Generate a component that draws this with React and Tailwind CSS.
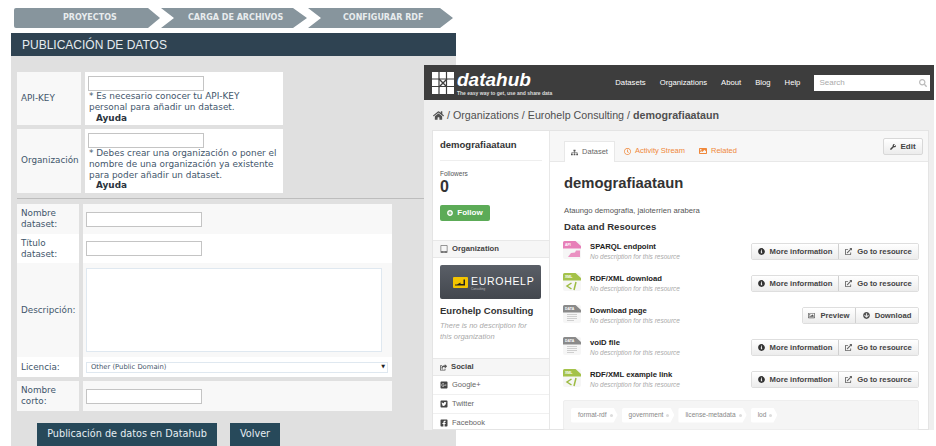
import { FaHome, FaSitemap, FaRegClock, FaImage, FaWrench, FaSearch, FaTabletAlt, FaShareSquare, FaGooglePlusSquare, FaTwitterSquare, FaFacebookSquare, FaInfoCircle, FaExternalLinkAlt, FaRegImage, FaArrowCircleDown, FaPlusCircle } from 'react-icons/fa';

const resources = [
  { name: 'SPARQL endpoint', kind: 'api' },
  { name: 'RDF/XML download', kind: 'xml' },
  { name: 'Download page', kind: 'data', download: true },
  { name: 'voiD file', kind: 'data' },
  { name: 'RDF/XML example link', kind: 'xml' },
];

const kinds = {
  api: { color: '#e77fb8', label: 'API' },
  xml: { color: '#a4c24a', label: 'XML' },
  data: { color: '#8a8a8a', label: 'DATA' },
};

const FileIcon = ({ kind }) => {
  const { color, label } = kinds[kind];
  return (
    <svg width="18" height="18" viewBox="0 0 18 18" className="-ml-[1px] shrink-0">
      <rect x="0" y="0" width="18" height="18" rx="2" fill="#f6f6f6" />
      <path d="M0 1.5A1.5 1.5 0 0 1 1.5 0H12.5L18 5V7.5H0Z" fill={color} />
      <text x="2" y="5" fontSize="3.5" fontWeight="700" fill="#fff" fontFamily="Liberation Sans, sans-serif">{label}</text>
      {kind === 'api' && <path d="M5 16L8 12L12 11.5L13 9.5H17V16Z" fill={color} opacity="0.85" />}
      {kind === 'xml' && <path d="M8.5 10L4 13L8.5 16M13 9L11 17" fill="none" stroke="#9dbb42" strokeWidth="1.5" />}
      {kind === 'data' && <path d="M4 9.5H14M4 11.5H14M4 13.5H14M4 15.5H11" stroke="#cfcfcf" strokeWidth="1" />}
    </svg>
  );
};

const ApiCell = ({ lines }) => (
  <div className="flex-1 whitespace-nowrap bg-white pl-[3px] pt-[4px] text-[8.9px] leading-[10.5px] text-[#3f566b]">
    <div className="h-[15px] w-[116px] border border-[#c4c4c4] bg-white" />
    {lines.map((l) => (
      <div key={l} className="mt-[0.3px] pl-[1px]">{l}</div>
    ))}
    <div className="pl-[8px] font-bold text-[#2b3440]">Ayuda</div>
  </div>
);

const FormRow = ({ label, bg, height, children }) => (
  <div className={`flex gap-[4px] ${height}`}>
    <div className={`flex w-[62px] items-center pl-[4px] ${bg === 'w' ? 'bg-white' : 'bg-[#f8f8f8]'}`}>
      <div className="leading-[11px]">{label}</div>
    </div>
    <div className={`flex flex-1 items-center pl-[3px] ${bg === 'w' ? 'bg-white' : 'bg-[#f8f8f8]'}`}>{children}</div>
  </div>
);

const TextBox = () => <div className="h-[15px] w-[116px] border border-[#c4c4c4] bg-white" />;

const GroupBtn = ({ icon, label, last, w }) => (
  <div className={`flex h-[15px] items-center justify-center gap-[5px] bg-gradient-to-b from-white to-[#ececec] text-[7.7px] font-bold text-[#444] ${w} ${last ? '' : 'border-r border-[#d0d0d0]'}`}>
    {icon}
    <span>{label}</span>
  </div>
);

const SideHead = ({ icon, label }) => (
  <div className="flex h-[18px] items-center gap-[4px] border-y border-[#e8e8e8] bg-[#f6f6f6] pl-[7px] text-[7.7px] font-bold text-[#444]">
    {icon}
    <span>{label}</span>
  </div>
);

const Tag = ({ label }) => (
  <div className="flex h-[15px] items-center gap-[3px] rounded-l-[2px] bg-white pl-[7px] pr-[5px] text-[6.6px] text-[#888] [clip-path:polygon(0_0,calc(100%-4px)_0,100%_50%,calc(100%-4px)_100%,0_100%)]">
    <span>{label}</span>
    <span className="h-[3px] w-[3px] rounded-full bg-[#ddd]" />
  </div>
);

export default function App() {
  return (
    <div className="relative h-[446px] w-[936px] overflow-hidden bg-white font-['DejaVu_Sans',sans-serif]">
      {/* Left: publish form */}
      <div className="ml-[11px] w-[445px] pt-[8px]">
        <div className="flex gap-[1px] pl-[3px] text-[8px] font-bold text-[#e8ecee]">
          <div className="flex h-[20px] w-[146px] shrink-0 items-center rounded-l-[2px] bg-[#87959d] pl-[49px] [clip-path:polygon(0_0,134px_0,100%_50%,134px_100%,0_100%)]">PROYECTOS</div>
          <div className="flex h-[20px] w-[146px] shrink-0 items-center bg-[#87959d] pl-[27px] [clip-path:polygon(0_0,132px_0,100%_50%,132px_100%,0_100%,13px_50%)]">CARGA DE ARCHIVOS</div>
          <div className="flex h-[20px] w-[145px] shrink-0 items-center bg-[#87959d] pl-[35px] [clip-path:polygon(0_0,132px_0,100%_50%,132px_100%,0_100%,13px_50%)]">CONFIGURAR RDF</div>
        </div>

        <div className="mt-[5px] flex h-[23px] items-center bg-[#2f4352] pl-[11px] font-['Liberation_Sans',sans-serif] text-[12px] text-[#e6ecf0]">
          PUBLICACIÓN DE DATOS
        </div>

        <div className="h-[390px] bg-[#e0e0e0] pl-[6px] pt-[16px] text-[8.8px] text-[#3f566b]">
          <div className="flex w-[266px] gap-[4px]">
            <div className="flex h-[53px] w-[64px] items-center bg-[#f8f8f8] pl-[4px]">API-KEY</div>
            <ApiCell lines={['* Es necesario conocer tu API-KEY', 'personal para añadir un dataset.']} />
          </div>
          <div className="mt-[4px] flex w-[266px] gap-[4px]">
            <div className="flex h-[64px] w-[64px] items-center bg-[#f8f8f8] pl-[4px]">Organización</div>
            <ApiCell lines={['* Debes crear una organización o poner el', 'nombre de una organización ya existente', 'para poder añadir un dataset.']} />
          </div>

          <div className="mt-[5px] h-[1px] w-[407px] bg-[#bdbdbd]" />

          <div className="mt-[5px] w-[375px]">
            <FormRow label={<>Nombre<br />dataset:</>} height="h-[30px]"><TextBox /></FormRow>
            <FormRow label={<>Título<br />dataset:</>} bg="w" height="h-[29px]"><TextBox /></FormRow>
            <FormRow label="Descripción:" height="h-[94px]">
              <div className="h-[84px] w-[296px] border border-[#dfe8f0] bg-white" />
            </FormRow>
            <FormRow label="Licencia:" bg="w" height="h-[20px]">
              <div className="flex h-[11px] w-[302px] items-center justify-between border border-[#dfe8f0] pl-[4px] pr-[2px] text-[6.8px]">
                <span>Other (Public Domain)</span>
                <span className="text-[5px] text-[#222]">▼</span>
              </div>
            </FormRow>
            <div className="mt-[4px]">
              <FormRow label={<>Nombre<br />corto:</>} height="h-[30px]"><TextBox /></FormRow>
            </div>
          </div>

          <div className="mt-[12px] flex gap-[13px] pl-[20px] text-[9.7px] text-[#e6eef2]">
            <div className="flex h-[23px] w-[180px] items-center justify-center bg-[#27495a]">Publicación de datos en Datahub</div>
            <div className="flex h-[23px] w-[50px] items-center justify-center bg-[#27495a]">Volver</div>
          </div>
        </div>
      </div>

      {/* Right: datahub window over the form */}
      <div className="absolute left-[424px] top-[65px] h-[365px] w-[510px] overflow-hidden bg-[#efefef] font-['Liberation_Sans',sans-serif]">
        <div className="flex h-[35px] items-center bg-[#3d3d3d] pl-[8px]">
          <svg width="22" height="22" viewBox="0 0 22 22" className="shrink-0">
            <rect width="22" height="22" fill="#fff" />
            <path d="M7 0V22M14.5 0V22M0 7H22M0 14.5H22" stroke="#3d3d3d" strokeWidth="1.2" />
            <path d="M7 7L15 15M15 7L7 15" stroke="#3d3d3d" strokeWidth="1.4" />
          </svg>
          <div className="ml-[3px]">
            <div className="h-[20px] text-[19px] font-bold italic leading-[20px] text-white">datahub</div>
            <div className="whitespace-nowrap text-[5px] font-bold leading-[6px] text-[#ddd]">The easy way to get, use and share data</div>
          </div>
          <div className="ml-[63px] flex gap-[14px] text-[7.7px] text-white">
            <span>Datasets</span>
            <span>Organizations</span>
            <span>About</span>
            <span>Blog</span>
            <span>Help</span>
          </div>
          <div className="ml-[14px] flex h-[16px] w-[116px] items-center justify-between bg-white pl-[5px] pr-[3px] text-[8px] text-[#aaa]">
            <span>Search</span>
            <FaSearch className="h-[8px] w-[8px] text-[#bbb]" />
          </div>
        </div>

        <div className="flex h-[30px] items-center gap-[3px] pl-[9px] pt-[1px] text-[10.7px] text-[#505050]">
          <FaHome className="h-[11px] w-[11px] text-[#505050]" />
          <span>/ Organizations / Eurohelp Consulting /</span>
          <span className="font-bold">demografiaataun</span>
        </div>

        <div className="ml-[8px] flex h-[300px] w-[497px] border border-[#e4e4e4] bg-white">
          <div className="w-[117px] shrink-0 border-r border-[#e8e8e8]">
            <div className="px-[7px] pt-[8px]">
              <div className="text-[9.5px] font-bold leading-[12px] text-[#333]">demografiaataun</div>
              <div className="mt-[9px] h-[1px] bg-[#eee]" />
              <div className="mt-[9px] text-[6.5px] leading-[8px] text-[#555]">Followers</div>
              <div className="text-[16px] font-bold leading-[17px] text-[#333]">0</div>
              <div className="mt-[10px] flex h-[16px] w-[50px] items-center justify-center gap-[4px] rounded-[2px] bg-[#5cab57] text-[8px] font-bold text-white">
                <FaPlusCircle className="h-[6px] w-[6px]" />
                <span>Follow</span>
              </div>
            </div>
            <div className="mt-[19px]">
              <SideHead icon={<FaTabletAlt className="h-[8px] w-[8px] text-[#777]" />} label="Organization" />
            </div>
            <div className="px-[7px] pt-[7px]">
              <div className="flex h-[34px] w-[101px] items-center rounded-[2px] bg-gradient-to-b from-[#5a5f67] to-[#43474e] pl-[13px]">
                <svg width="15" height="11" viewBox="0 0 15 11" className="shrink-0">
                  <rect width="15" height="11" rx="1" fill="#f4c400" />
                  <path d="M2 8.5H12V2.5H10.5V7H7.5V5.5L4 7.5H2Z" fill="#222" />
                </svg>
                <div className="ml-[3px] mt-[2px]">
                  <div className="text-[10.5px] leading-[11px] tracking-[0.7px] text-white">EUROHELP</div>
                  <div className="text-[3px] leading-[4px] text-[#bbb]">Consulting</div>
                </div>
              </div>
              <div className="mt-[6px] text-[9.5px] font-bold leading-[12px] text-[#333]">Eurohelp Consulting</div>
              <div className="mt-[4px] text-[7.5px] italic leading-[10.5px] text-[#aaa]">There is no description for<br />this organization</div>
            </div>
            <div className="mt-[16px]">
              <SideHead icon={<FaShareSquare className="h-[7px] w-[7px] text-[#555]" />} label="Social" />
            </div>
            {[
              [FaGooglePlusSquare, 'Google+'],
              [FaTwitterSquare, 'Twitter'],
              [FaFacebookSquare, 'Facebook'],
            ].map(([Icon, label]) => (
              <div key={label} className="flex h-[19px] items-center gap-[4px] border-b border-[#f0f0f0] pl-[7px] text-[7.5px] text-[#666]">
                <Icon className="h-[8px] w-[8px] text-[#444]" />
                <span>{label}</span>
              </div>
            ))}
          </div>

          <div className="min-w-0 flex-1">
            <div className="flex h-[31px] items-end justify-between border-b border-[#e8e8e8] bg-[#f7f7f7] pl-[14px] pr-[5px]">
              <div className="flex text-[7.5px] text-[#f0883a]">
                <div className="-mb-[1px] flex h-[21px] w-[51px] items-center justify-center gap-[4px] border-x border-t border-[#e8e8e8] bg-white text-[#666]">
                  <FaSitemap className="h-[7px] w-[7px] text-[#555]" />
                  <span>Dataset</span>
                </div>
                <div className="flex h-[20px] items-center gap-[4px] pl-[9px]">
                  <FaRegClock className="h-[7px] w-[7px]" />
                  <span>Activity Stream</span>
                </div>
                <div className="flex h-[20px] items-center gap-[4px] pl-[14px]">
                  <FaImage className="h-[8px] w-[8px]" />
                  <span>Related</span>
                </div>
              </div>
              <div className="mb-[6px] flex h-[17px] w-[40px] items-center justify-center gap-[4px] rounded-[2px] border border-[#d8d8d8] bg-gradient-to-b from-white to-[#ececec] text-[8px] font-bold text-[#444]">
                <FaWrench className="h-[6px] w-[6px]" />
                <span>Edit</span>
              </div>
            </div>

            <div className="pl-[14px] pr-[9px]">
              <div className="mt-[12px] text-[14.8px] font-bold leading-[18px] text-[#333]">demografiaataun</div>
              <div className="mt-[14px] text-[7.7px] leading-[10px] text-[#555]">Ataungo demografia, jaioterrien arabera</div>
              <div className="mt-[5px] text-[9.6px] font-bold leading-[12px] text-[#333]">Data and Resources</div>

              <div className="mt-[8px]">
                {resources.map((r) => (
                  <div key={r.name} className="flex h-[32px] items-start">
                    <FileIcon kind={r.kind} />
                    <div className="ml-[9px] flex-1 pt-[1px]">
                      <div className="text-[7.7px] font-bold leading-[10px] text-[#222]">{r.name}</div>
                      <div className="text-[6.5px] italic leading-[9px] text-[#aaa]">No description for this resource</div>
                    </div>
                    <div className="mt-[2px] flex overflow-hidden rounded-[2px] border border-[#dedede]">
                      {r.download ? (
                        <>
                          <GroupBtn w="w-[53px]" icon={<FaRegImage className="h-[7px] w-[7px] text-[#555]" />} label="Preview" />
                          <GroupBtn w="w-[62px]" last icon={<FaArrowCircleDown className="h-[7px] w-[7px] text-[#555]" />} label="Download" />
                        </>
                      ) : (
                        <>
                          <GroupBtn w="w-[87px]" icon={<FaInfoCircle className="h-[7px] w-[7px] text-[#333]" />} label="More information" />
                          <GroupBtn w="w-[79px]" last icon={<FaExternalLinkAlt className="h-[7px] w-[7px] text-[#666]" />} label="Go to resource" />
                        </>
                      )}
                    </div>
                  </div>
                ))}
              </div>

              <div className="-ml-[1px] -mt-[1px] flex h-[30px] items-center gap-[4px] rounded-[2px] border border-[#eee] bg-[#f5f5f5] pl-[7px]">
                <Tag label="format-rdf" />
                <Tag label="government" />
                <Tag label="license-metadata" />
                <Tag label="lod" />
              </div>
            </div>
          </div>
        </div>
      </div>
    </div>
  );
}
